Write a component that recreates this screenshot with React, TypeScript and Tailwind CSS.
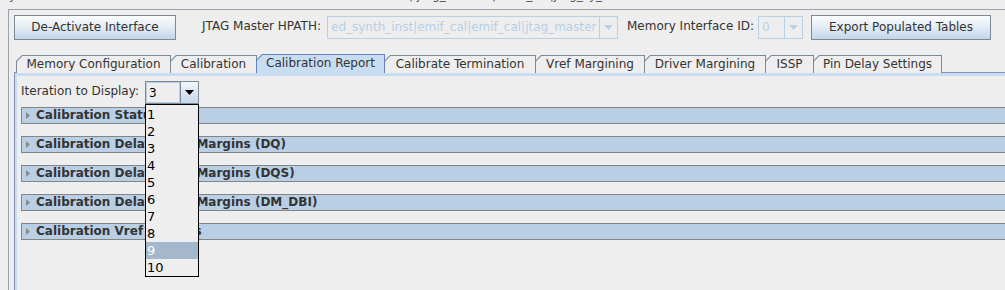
import React from "react";

const tabs = [
  { label: "Memory Configuration", w: "w-[155px]" },
  { label: "Calibration", w: "w-[87px]" },
  { label: "Calibration Report", w: "w-[129px]", selected: true },
  { label: "Calibrate Termination", w: "w-[152px]" },
  { label: "Vref Margining", w: "w-[110px]" },
  { label: "Driver Margining", w: "w-[122px]" },
  { label: "ISSP", w: "w-[49px]" },
  { label: "Pin Delay Settings", w: "w-[129px]" },
];

const sections = [
  "Calibration Status",
  "Calibration Delay/Skew Margins (DQ)",
  "Calibration Delay/Skew Margins (DQS)",
  "Calibration Delay/Skew Margins (DM_DBI)",
  "Calibration Vref Margins",
];

const iterations = ["1", "2", "3", "4", "5", "6", "7", "8", "9", "10"];

const OceanButton: React.FC<{ label: string; className: string }> = ({ label, className }) => (
  <div
    className={`${className} h-[25px] border border-[#7a8a99] bg-gradient-to-b from-[#fbfcfd] via-[#e3ecf5] to-[#c2d5e9] flex items-center justify-center text-[#333]`}
  >
    {label}
  </div>
);

const DownArrow: React.FC<{ color: string }> = ({ color }) => (
  <svg width="9" height="5" viewBox="0 0 9 5">
    <path d="M0 0 H9 L4.5 5 Z" fill={color} />
  </svg>
);

// disabled combo box from the top bar
const DisabledCombo: React.FC<{ text: string; fieldW: string }> = ({ text, fieldW }) => (
  <div className="flex h-[23px] border border-[#b8cfe5]">
    <div className={`${fieldW} h-full pl-[3px] flex items-center text-[#b8cfe5] overflow-hidden whitespace-nowrap`}>
      {text}
    </div>
    <div className="w-[18px] h-full border-l border-[#b8cfe5] flex items-center justify-center">
      <DownArrow color="#b8cfe5" />
    </div>
  </div>
);

const Tab: React.FC<{ label: string; w: string; selected?: boolean; first?: boolean }> = ({
  label,
  w,
  selected,
  first,
}) => (
  <div
    className={`${w} ${first ? "" : "-ml-px"} ${
      selected ? "h-[19px] bg-[#6382bf] relative z-10" : "h-[18px] bg-[#7a8a99]"
    } p-px pb-0 [clip-path:polygon(6px_0,100%_0,100%_100%,0_100%,0_6px)]`}
  >
    <div
      className={`h-full ${
        selected ? "bg-[#c8ddf2]" : "bg-[#eeeeee]"
      } [clip-path:polygon(5.5px_0,100%_0,100%_100%,0_100%,0_5.5px)] flex items-center justify-center pb-px text-[#333] whitespace-nowrap`}
    >
      {label}
    </div>
  </div>
);

export default function App() {
  return (
    <div className="w-[1005px] h-[290px] overflow-hidden bg-[#eeeeee] text-[12px] leading-[15px] text-[#333] font-['DejaVu_Sans',sans-serif]">
      {/* clipped title line above the panel */}
      <div className="h-[9px] overflow-hidden flex text-[#555]">
        <span className="ml-[9px] -mt-[13px] leading-[16px]">y</span>
        <span className="ml-[372px] -mt-[13px] leading-[16px] whitespace-nowrap">[0] | jtag_master | emif_cal|jtag_sy_m</span>
      </div>

      <div className="ml-[8px] h-[281px] border-l border-t border-[#9aa3ad]">
        {/* toolbar */}
        <div className="flex items-center pl-[5px] pt-[5px]">
          <OceanButton label="De-Activate Interface" className="w-[162px]" />
          <div className="ml-[26px] w-[125px] whitespace-nowrap pb-[3px]">JTAG Master HPATH:</div>
          <DisabledCombo text="ed_synth_inst|emif_cal|emif_cal|jtag_master" fieldW="w-[271px]" />
          <div className="ml-[9px] w-[131px] whitespace-nowrap pb-[3px]">Memory Interface ID:</div>
          <DisabledCombo text="0" fieldW="w-[25px]" />
          <OceanButton label="Export Populated Tables" className="ml-[8px] w-[180px]" />
        </div>

        {/* tabs */}
        <div className="mt-[14px] pl-[7px] flex items-end h-[19px] relative z-10">
          {tabs.map((t, i) => (
            <Tab key={t.label} {...t} first={i === 0} />
          ))}
        </div>

        {/* tab content */}
        <div className="-mt-px ml-[5px] h-[220px] border-l border-t border-[#7f94b5]">
          <div className="h-full border-l-2 border-t-[3px] border-[#c8ddf2] pl-[4px] pt-[5px]">
            <div className="flex items-center">
              <div className="w-[124px] whitespace-nowrap pb-[2px]">Iteration to Display:</div>
              <div className="relative z-20">
                <div className="flex h-[23px] w-[54px] border border-[#7a8a99]">
                  <div className="w-[34px] h-full border border-[#b8cfe5] flex items-end pl-[2px] pb-[1px] text-black">3</div>
                  <div className="w-[18px] h-full border-l border-[#7a8a99] bg-gradient-to-b from-[#f2f6fa] to-[#c5d7ea] flex items-center justify-center">
                    <DownArrow color="#000" />
                  </div>
                </div>
                {/* open popup list */}
                <div className="absolute left-0 top-full w-[54px] border border-black bg-[#eeeeee] pt-px">
                  {iterations.map((n) => (
                    <div
                      key={n}
                      className={`h-[17px] pl-px flex items-center text-[13px] ${
                        n === "9" ? "bg-[#a3b8cc] text-white" : "text-black"
                      }`}
                    >
                      {n}
                    </div>
                  ))}
                </div>
              </div>
            </div>

            <div className="mt-[3px] flex flex-col gap-[12px]">
              {sections.map((s) => (
                <div
                  key={s}
                  className="h-[17px] border-y border-l border-[#858585] bg-[#b8cfe5] flex items-center pl-[4px] whitespace-nowrap"
                >
                  <svg width="4" height="7" viewBox="0 0 4 7">
                    <path d="M0 0 L4 3.5 L0 7 Z" fill="#8a8a8a" />
                  </svg>
                  <span className="ml-[6px] font-bold text-[#333]">{s}</span>
                </div>
              ))}
            </div>
          </div>
        </div>
      </div>
    </div>
  );
}
